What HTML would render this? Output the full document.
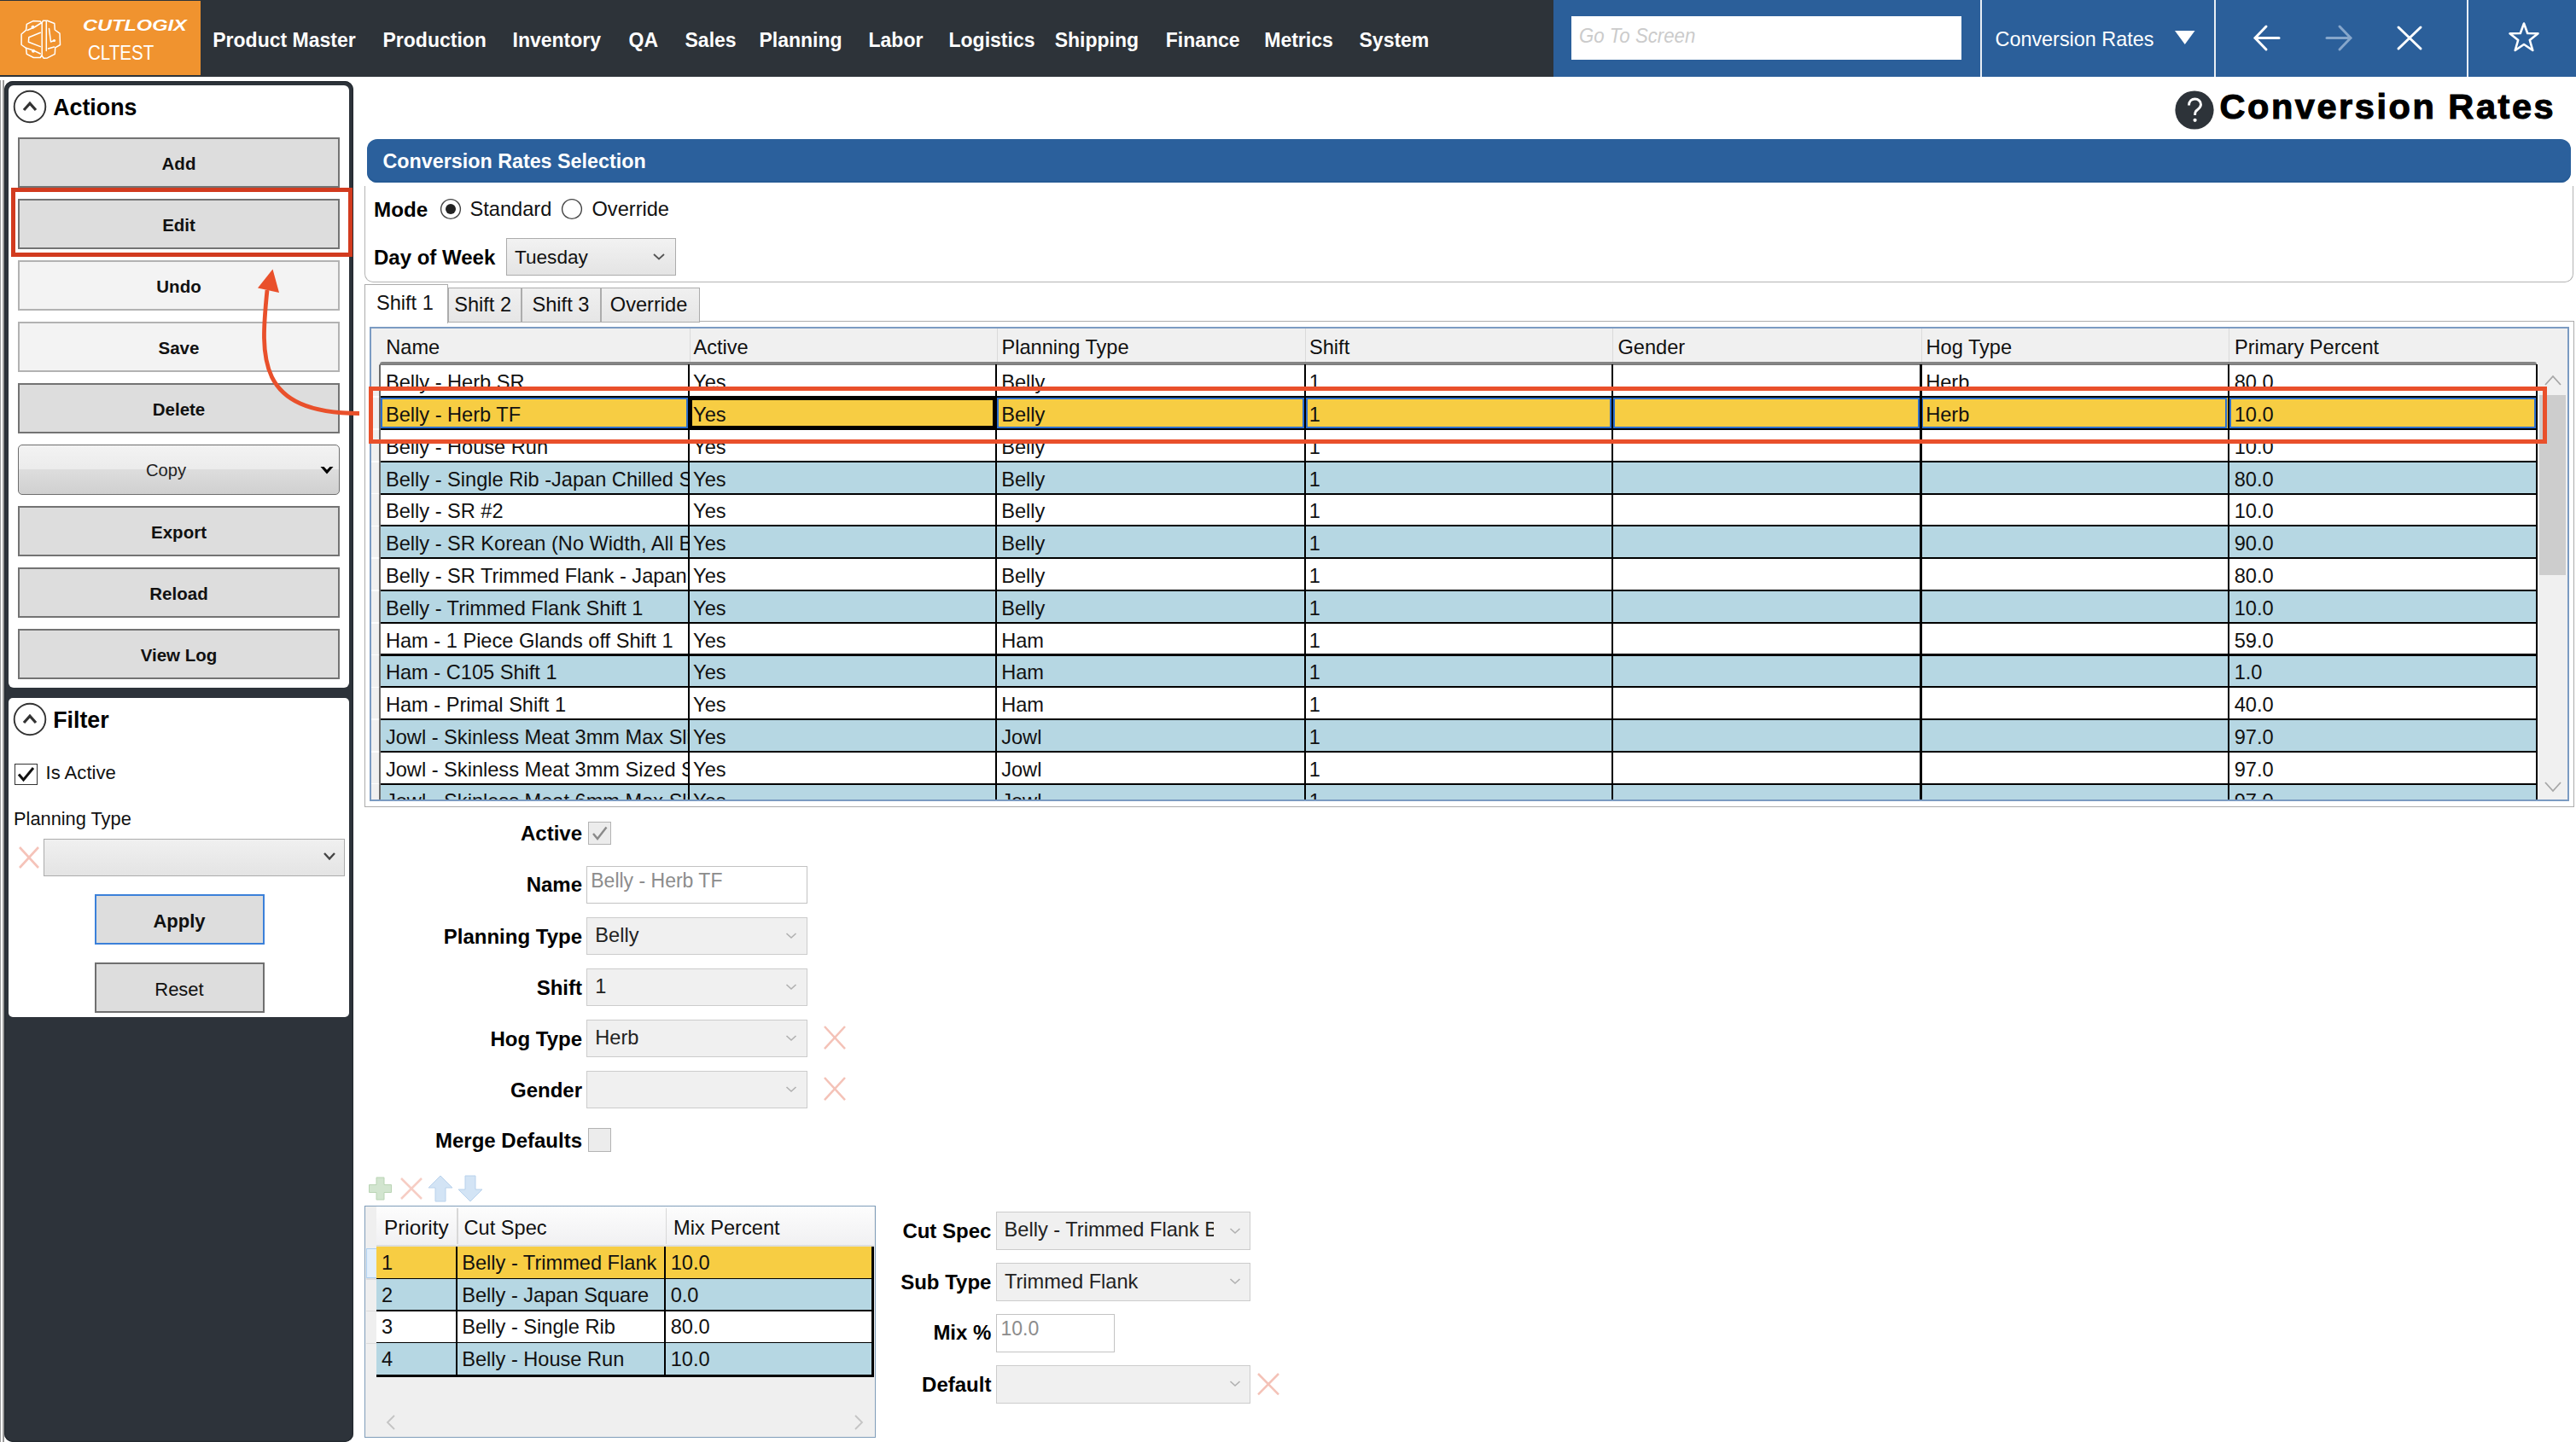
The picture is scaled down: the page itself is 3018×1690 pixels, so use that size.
<!DOCTYPE html>
<html><head><meta charset="utf-8"><style>
html,body{margin:0;padding:0;background:#fff;}
#root{position:relative;width:3018px;height:1690px;overflow:hidden;background:#fff;font-family:"Liberation Sans",sans-serif;}
#root div,#root svg{position:absolute;}
</style></head><body><div id="root">
<div style="left:0.00px;top:0.00px;width:1820.00px;height:90.00px;background:#2d3339;"></div>
<div style="left:0.00px;top:1.00px;width:234.80px;height:87.30px;background:#f0932f;"></div>
<div style="left:1819.50px;top:0.00px;width:1198.50px;height:90.00px;background:#2b5f9a;"></div>
<svg style="left:18.00px;top:15.00px;" width="60.00" height="60.00" viewBox="0 0 60.00 60.00"><g fill="none" stroke="#fff" stroke-width="1.5" stroke-linejoin="round" stroke-linecap="round">
<path d="M20.8 9.6 L29.2 10 L30.8 12.5 L32.5 9.2 L37.5 9.2 L45.8 12.5 L46.3 20 L52 24.2 L52.5 37.5 L46.7 40.8 L46.3 48.3 L37.5 52.9 L33.3 53.3 L30.8 50 L29.2 52.5 L21.3 52.5 L13.3 48.3 L12.5 41.3 L7.1 37.5 L7.1 25 L12.5 20.4 L13.3 13.3 Z"/>
<path d="M31.2 12.5 V50"/>
<path d="M36.3 10 V44.5"/>
<path d="M29.3 23.3 L15.8 28.8 L15.4 34.2 L29.3 39.6"/>
<path d="M29.3 12.5 L23 16.5 L14 20.5"/>
<path d="M12.5 41.3 L21 44 L29.3 48"/>
<path d="M39.5 18.5 L41.5 34 L45.5 32.5"/>
<path d="M38.5 42 L45.5 40"/>
</g><g fill="#fff"><circle cx="20.5" cy="16.8" r="2"/><circle cx="21" cy="44.8" r="2"/><circle cx="45.5" cy="32.5" r="1.6"/></g></svg>
<div style="left:97.30px;top:20.76px;font-size:18px;line-height:18px;color:#fff;white-space:nowrap;font-weight:bold;font-style:italic;transform:scaleX(1.3100);transform-origin:0 0;">CUTLOGIX</div>
<div style="left:103.30px;top:49.81px;font-size:24.8px;line-height:24.8px;color:#fff;white-space:nowrap;transform:scaleX(0.8300);transform-origin:0 0;">CLTEST</div>
<div style="left:249.25px;top:35.53px;font-size:23px;line-height:23px;color:#fff;white-space:nowrap;font-weight:bold;--w:166.75;">Product Master</div>
<div style="left:448.50px;top:35.53px;font-size:23px;line-height:23px;color:#fff;white-space:nowrap;font-weight:bold;--w:119.5;">Production</div>
<div style="left:600.50px;top:35.53px;font-size:23px;line-height:23px;color:#fff;white-space:nowrap;font-weight:bold;--w:104;">Inventory</div>
<div style="left:736.50px;top:35.53px;font-size:23px;line-height:23px;color:#fff;white-space:nowrap;font-weight:bold;--w:34;">QA</div>
<div style="left:802.50px;top:35.53px;font-size:23px;line-height:23px;color:#fff;white-space:nowrap;font-weight:bold;--w:56;">Sales</div>
<div style="left:889.50px;top:35.53px;font-size:23px;line-height:23px;color:#fff;white-space:nowrap;font-weight:bold;--w:95;">Planning</div>
<div style="left:1017.50px;top:35.53px;font-size:23px;line-height:23px;color:#fff;white-space:nowrap;font-weight:bold;--w:61;">Labor</div>
<div style="left:1111.50px;top:35.53px;font-size:23px;line-height:23px;color:#fff;white-space:nowrap;font-weight:bold;--w:93;">Logistics</div>
<div style="left:1235.70px;top:35.53px;font-size:23px;line-height:23px;color:#fff;white-space:nowrap;font-weight:bold;--w:97.3;">Shipping</div>
<div style="left:1365.75px;top:35.53px;font-size:23px;line-height:23px;color:#fff;white-space:nowrap;font-weight:bold;--w:83;">Finance</div>
<div style="left:1481.25px;top:35.53px;font-size:23px;line-height:23px;color:#fff;white-space:nowrap;font-weight:bold;--w:79.25;">Metrics</div>
<div style="left:1592.50px;top:35.53px;font-size:23px;line-height:23px;color:#fff;white-space:nowrap;font-weight:bold;--w:78;">System</div>
<div style="left:1841.00px;top:19.00px;width:457.00px;height:51.00px;background:#fff;"></div>
<div style="left:1849.50px;top:30.59px;font-size:23.4px;line-height:23.4px;color:#cbcbcb;white-space:nowrap;font-style:italic;transform:scaleX(0.9500);transform-origin:0 0;">Go To Screen</div>
<div style="left:2319.50px;top:0.00px;width:2.00px;height:90.00px;background:#e8eef5;"></div>
<div style="left:2594.00px;top:0.00px;width:2.00px;height:90.00px;background:#e8eef5;"></div>
<div style="left:2889.50px;top:0.00px;width:2.00px;height:90.00px;background:#e8eef5;"></div>
<div style="left:2337.50px;top:34.69px;font-size:23.4px;line-height:23.4px;color:#fff;white-space:nowrap;">Conversion Rates</div>
<svg style="left:2546.00px;top:34.00px;" width="28.00" height="20.00" viewBox="0 0 28.00 20.00"><path d="M2 2 L25.5 2 L13.75 18 Z" fill="#fff"/></svg>
<svg style="left:2636.00px;top:26.00px;" width="40.00" height="38.00" viewBox="0 0 40.00 38.00"><g fill="none" stroke="#fff" stroke-width="3" stroke-linecap="round" stroke-linejoin="round"><path d="M6 18.5 H34"/><path d="M19 5 L6 18.5 L19 32"/></g></svg>
<svg style="left:2720.00px;top:26.00px;" width="40.00" height="38.00" viewBox="0 0 40.00 38.00"><g fill="none" stroke="#86a6cb" stroke-width="3" stroke-linecap="round" stroke-linejoin="round"><path d="M6 18.5 H34"/><path d="M21 5 L34 18.5 L21 32"/></g></svg>
<svg style="left:2805.00px;top:27.00px;" width="36.00" height="36.00" viewBox="0 0 36.00 36.00"><g fill="none" stroke="#fff" stroke-width="3" stroke-linecap="round"><path d="M5 5 L31 30"/><path d="M31 5 L5 30"/></g></svg>
<svg style="left:2936.00px;top:23.00px;" width="42.00" height="42.00" viewBox="0 0 42.00 42.00"><path d="M21 4.5 L25.2 16 L37.5 16.3 L27.8 24 L31.3 36 L21 29 L10.7 36 L14.2 24 L4.5 16.3 L16.8 16 Z" fill="none" stroke="#fff" stroke-width="2.6" stroke-linejoin="round"/></svg>
<div style="left:0.00px;top:94.00px;width:1.20px;height:1596.00px;background:#9a9a9a;"></div>
<div style="left:3.10px;top:94.00px;width:1.60px;height:1596.00px;background:#9a9a9a;"></div>
<div style="left:4.66px;top:94.60px;width:409.74px;height:1595.20px;background:#2d333a;border-radius:10px;box-shadow:inset 0 0 0 1.2px #23292f;"></div>
<div style="left:10.10px;top:100.40px;width:398.50px;height:705.60px;background:#fff;border-radius:6px;"></div>
<div style="left:10.10px;top:818.00px;width:398.50px;height:374.30px;background:#fff;border-radius:5px;"></div>
<svg style="left:14.30px;top:104.30px;" width="42.00" height="42.00" viewBox="0 0 42.00 42.00"><circle cx="21" cy="21" r="18.3" fill="none" stroke="#333" stroke-width="1.9"/><path d="M14 25 L21 17.2 L28 25" fill="none" stroke="#333" stroke-width="3.2"/></svg>
<div style="left:62.20px;top:113.41px;font-size:26.8px;line-height:26.8px;color:#000;white-space:nowrap;font-weight:bold;">Actions</div>
<div style="left:21.00px;top:161.00px;width:377.00px;height:58.50px;background:#dddddd;border:2px solid #737373;box-sizing:border-box;"></div>
<div style="left:-190.50px;top:181.90px;width:800px;text-align:center;font-size:20.5px;line-height:20.5px;color:#111;white-space:nowrap;font-weight:bold;">Add</div>
<div style="left:21.00px;top:233.00px;width:377.00px;height:58.50px;background:#dddddd;border:2px solid #737373;box-sizing:border-box;"></div>
<div style="left:-190.50px;top:253.90px;width:800px;text-align:center;font-size:20.5px;line-height:20.5px;color:#111;white-space:nowrap;font-weight:bold;">Edit</div>
<div style="left:21.00px;top:305.00px;width:377.00px;height:58.50px;background:#f3f3f3;border:2px solid #b2b2b2;box-sizing:border-box;"></div>
<div style="left:-190.50px;top:325.90px;width:800px;text-align:center;font-size:20.5px;line-height:20.5px;color:#111;white-space:nowrap;font-weight:bold;">Undo</div>
<div style="left:21.00px;top:377.00px;width:377.00px;height:58.50px;background:#f3f3f3;border:2px solid #b2b2b2;box-sizing:border-box;"></div>
<div style="left:-190.50px;top:397.90px;width:800px;text-align:center;font-size:20.5px;line-height:20.5px;color:#111;white-space:nowrap;font-weight:bold;">Save</div>
<div style="left:21.00px;top:449.00px;width:377.00px;height:58.50px;background:#dddddd;border:2px solid #737373;box-sizing:border-box;"></div>
<div style="left:-190.50px;top:469.90px;width:800px;text-align:center;font-size:20.5px;line-height:20.5px;color:#111;white-space:nowrap;font-weight:bold;">Delete</div>
<div style="left:20.90px;top:521.00px;width:377.00px;height:58.50px;background:linear-gradient(#f3f3f3 0%,#ebebeb 50%,#dddddd 50%,#d0d0d0 100%);border:1.6px solid #6e6e6e;border-radius:5px;box-sizing:border-box;"></div>
<div style="left:-205.40px;top:540.90px;width:800px;text-align:center;font-size:20.2px;line-height:20.2px;color:#222;white-space:nowrap;">Copy</div>
<svg style="left:374.00px;top:545.00px;" width="18.00" height="12.00" viewBox="0 0 18.00 12.00"><path d="M1.5 2 L5.5 2 L9 5.8 L12.5 2 L16.5 2 L9 10.5 Z" fill="#000"/></svg>
<div style="left:21.00px;top:593.00px;width:377.00px;height:58.50px;background:#dddddd;border:2px solid #737373;box-sizing:border-box;"></div>
<div style="left:-190.50px;top:613.90px;width:800px;text-align:center;font-size:20.5px;line-height:20.5px;color:#111;white-space:nowrap;font-weight:bold;">Export</div>
<div style="left:21.00px;top:665.00px;width:377.00px;height:58.50px;background:#dddddd;border:2px solid #737373;box-sizing:border-box;"></div>
<div style="left:-190.50px;top:685.90px;width:800px;text-align:center;font-size:20.5px;line-height:20.5px;color:#111;white-space:nowrap;font-weight:bold;">Reload</div>
<div style="left:21.00px;top:737.00px;width:377.00px;height:58.50px;background:#dddddd;border:2px solid #737373;box-sizing:border-box;"></div>
<div style="left:-190.50px;top:757.90px;width:800px;text-align:center;font-size:20.5px;line-height:20.5px;color:#111;white-space:nowrap;font-weight:bold;">View Log</div>
<svg style="left:14.30px;top:822.00px;" width="42.00" height="42.00" viewBox="0 0 42.00 42.00"><circle cx="21" cy="21" r="18.3" fill="none" stroke="#333" stroke-width="1.9"/><path d="M14 25 L21 17.2 L28 25" fill="none" stroke="#333" stroke-width="3.2"/></svg>
<div style="left:62.20px;top:831.31px;font-size:26.8px;line-height:26.8px;color:#000;white-space:nowrap;font-weight:bold;">Filter</div>
<div style="left:17.00px;top:894.50px;width:27.00px;height:25.00px;background:#fff;border:1.6px solid #333;box-sizing:border-box;"></div>
<svg style="left:17.00px;top:894.50px;" width="27.00" height="25.00" viewBox="0 0 27.00 25.00"><path d="M5 12.5 L10.5 19 L22 5" fill="none" stroke="#111" stroke-width="3"/></svg>
<div style="left:53.50px;top:895.29px;font-size:22.1px;line-height:22.1px;color:#111;white-space:nowrap;">Is Active</div>
<div style="left:16.00px;top:949.05px;font-size:21.8px;line-height:21.8px;color:#111;white-space:nowrap;">Planning Type</div>
<div style="left:51.25px;top:982.50px;width:352.25px;height:44.50px;background:linear-gradient(#f0f0f0,#e4e4e4);border:1.6px solid #acacac;box-sizing:border-box;"></div>
<svg style="left:378.00px;top:998.00px;" width="16.00" height="12.00" viewBox="0 0 16.00 12.00"><path d="M2 2 L8 8.5 L14 2" fill="none" stroke="#444" stroke-width="2.4"/></svg>
<svg style="left:20.00px;top:990.00px;" width="28.00" height="30.00" viewBox="0 0 28.00 30.00"><g stroke="#f5c3b9" stroke-width="2.6"><path d="M3 3 L25 27"/><path d="M25 3 L3 27"/></g></svg>
<div style="left:110.60px;top:1048.20px;width:199.20px;height:59.05px;background:#dddddd;border:2.2px solid #3b80d9;box-sizing:border-box;"></div>
<div style="left:-190.00px;top:1069.38px;width:800px;text-align:center;font-size:22px;line-height:22px;color:#111;white-space:nowrap;font-weight:bold;">Apply</div>
<div style="left:110.60px;top:1128.40px;width:199.20px;height:58.60px;background:#dddddd;border:2px solid #6f6f6f;box-sizing:border-box;"></div>
<div style="left:-190.00px;top:1149.38px;width:800px;text-align:center;font-size:22px;line-height:22px;color:#111;white-space:nowrap;">Reset</div>
<svg style="left:2548.00px;top:105.50px;" width="46.00" height="46.00" viewBox="0 0 46.00 46.00"><circle cx="23" cy="23" r="22.6" fill="#2d3339"/><path d="M16.5 17.5 C16.5 12.5 20 10 23.5 10 C27.5 10 30.5 12.8 30.5 16.5 C30.5 20.5 26.5 22 24.5 24.5 C23.8 25.5 23.6 27 23.6 29" fill="none" stroke="#fff" stroke-width="2.9"/><circle cx="23.6" cy="34.8" r="2.1" fill="#fff"/></svg>
<div style="left:2600.50px;top:104.07px;font-size:41.5px;line-height:41.5px;color:#000;white-space:nowrap;font-weight:bold;letter-spacing:2.55px;-webkit-text-stroke:1.1px #000;">Conversion Rates</div>
<div style="left:430.00px;top:162.50px;width:2581.60px;height:51.90px;background:#2b609c;border-radius:12px;box-shadow:inset 0 -2px 0 #255a95;"></div>
<div style="left:448.50px;top:177.78px;font-size:23.3px;line-height:23.3px;color:#fff;white-space:nowrap;font-weight:bold;">Conversion Rates Selection</div>
<div style="left:427.00px;top:218.00px;width:2588.00px;height:113.00px;border:1.5px solid #b4b4b4;border-top:none;border-radius:0 0 10px 10px;box-sizing:border-box;"></div>
<div style="left:438.00px;top:233.51px;font-size:24.2px;line-height:24.2px;color:#000;white-space:nowrap;font-weight:bold;">Mode</div>
<svg style="left:514.00px;top:230.50px;" width="28.00" height="28.00" viewBox="0 0 28.00 28.00"><circle cx="14" cy="14" r="11.4" fill="#fff" stroke="#444" stroke-width="1.4"/><circle cx="14" cy="14" r="6" fill="#222"/></svg>
<div style="left:550.50px;top:234.02px;font-size:23.6px;line-height:23.6px;color:#111;white-space:nowrap;">Standard</div>
<svg style="left:656.00px;top:230.50px;" width="28.00" height="28.00" viewBox="0 0 28.00 28.00"><circle cx="14" cy="14" r="11.4" fill="#fff" stroke="#444" stroke-width="1.4"/></svg>
<div style="left:693.50px;top:234.02px;font-size:23.6px;line-height:23.6px;color:#111;white-space:nowrap;">Override</div>
<div style="left:438.00px;top:289.68px;font-size:24px;line-height:24px;color:#000;white-space:nowrap;font-weight:bold;">Day of Week</div>
<div style="left:592.50px;top:279.00px;width:199.50px;height:44.00px;background:linear-gradient(#f2f2f2,#e4e4e4);border:1.6px solid #acacac;box-sizing:border-box;"></div>
<div style="left:603.00px;top:290.87px;font-size:22.6px;line-height:22.6px;color:#111;white-space:nowrap;">Tuesday</div>
<svg style="left:764.00px;top:296.00px;" width="16.00" height="10.00" viewBox="0 0 16.00 10.00"><path d="M2 2 L8 7.5 L14 2" fill="none" stroke="#555" stroke-width="1.8"/></svg>
<div style="left:426.50px;top:376.30px;width:2589.00px;height:569.70px;border:1.5px solid #acacac;box-sizing:border-box;"></div>
<div style="left:525.30px;top:337.00px;width:85.70px;height:41.00px;background:linear-gradient(#f0f0f0,#e6e6e6);border:1.5px solid #acacac;box-sizing:border-box;"></div>
<div style="left:532.20px;top:345.62px;font-size:23.6px;line-height:23.6px;color:#111;white-space:nowrap;">Shift 2</div>
<div style="left:611.00px;top:337.00px;width:93.20px;height:41.00px;background:linear-gradient(#f0f0f0,#e6e6e6);border:1.5px solid #acacac;box-sizing:border-box;"></div>
<div style="left:623.50px;top:345.62px;font-size:23.6px;line-height:23.6px;color:#111;white-space:nowrap;">Shift 3</div>
<div style="left:704.20px;top:337.00px;width:115.50px;height:41.00px;background:linear-gradient(#f0f0f0,#e6e6e6);border:1.5px solid #acacac;box-sizing:border-box;"></div>
<div style="left:714.80px;top:345.62px;font-size:23.6px;line-height:23.6px;color:#111;white-space:nowrap;">Override</div>
<div style="left:426.50px;top:333.00px;width:98.80px;height:45.50px;background:#fff;border:1.5px solid #acacac;border-bottom:none;box-sizing:border-box;"></div>
<div style="left:440.90px;top:344.22px;font-size:23.6px;line-height:23.6px;color:#111;white-space:nowrap;">Shift 1</div>
<div style="left:432.50px;top:382.80px;width:2577.50px;height:556.70px;background:#f0f0f0;border:2px solid #7b9bc2;box-sizing:border-box;"></div>
<div style="left:807.50px;top:385.00px;width:1.20px;height:40.40px;background:#dadada;"></div>
<div style="left:1167.50px;top:385.00px;width:1.20px;height:40.40px;background:#dadada;"></div>
<div style="left:1529.25px;top:385.00px;width:1.20px;height:40.40px;background:#dadada;"></div>
<div style="left:1889.30px;top:385.00px;width:1.20px;height:40.40px;background:#dadada;"></div>
<div style="left:2250.90px;top:385.00px;width:1.20px;height:40.40px;background:#dadada;"></div>
<div style="left:2611.00px;top:385.00px;width:1.20px;height:40.40px;background:#dadada;"></div>
<div style="left:452.25px;top:395.62px;font-size:23.6px;line-height:23.6px;color:#111;white-space:nowrap;">Name</div>
<div style="left:812.40px;top:395.62px;font-size:23.6px;line-height:23.6px;color:#111;white-space:nowrap;">Active</div>
<div style="left:1173.50px;top:395.62px;font-size:23.6px;line-height:23.6px;color:#111;white-space:nowrap;">Planning Type</div>
<div style="left:1534.00px;top:395.62px;font-size:23.6px;line-height:23.6px;color:#111;white-space:nowrap;">Shift</div>
<div style="left:1895.50px;top:395.62px;font-size:23.6px;line-height:23.6px;color:#111;white-space:nowrap;">Gender</div>
<div style="left:2256.50px;top:395.62px;font-size:23.6px;line-height:23.6px;color:#111;white-space:nowrap;">Hog Type</div>
<div style="left:2618.00px;top:395.62px;font-size:23.6px;line-height:23.6px;color:#111;white-space:nowrap;">Primary Percent</div>
<div style="left:445.00px;top:427.40px;width:2528.60px;height:510.10px;overflow:hidden;background:#fff;">
<div style="left:0.00px;top:0.00px;width:2526.60px;height:37.79px;background:#fff;"></div>
<div style="left:2.00px;top:0.00px;width:359.00px;height:37.79px;overflow:hidden;"><div style="left:4.95px;top:9.82px;font-size:23.6px;line-height:23.6px;white-space:nowrap;color:#111;">Belly - Herb SR</div></div>
<div style="left:364.00px;top:0.00px;width:357.00px;height:37.79px;overflow:hidden;"><div style="left:3.10px;top:9.82px;font-size:23.6px;line-height:23.6px;white-space:nowrap;color:#111;">Yes</div></div>
<div style="left:724.00px;top:0.00px;width:358.75px;height:37.79px;overflow:hidden;"><div style="left:4.20px;top:9.82px;font-size:23.6px;line-height:23.6px;white-space:nowrap;color:#111;">Belly</div></div>
<div style="left:1085.75px;top:0.00px;width:357.05px;height:37.79px;overflow:hidden;"><div style="left:2.95px;top:9.82px;font-size:23.6px;line-height:23.6px;white-space:nowrap;color:#111;">1</div></div>
<div style="left:1807.40px;top:0.00px;width:357.10px;height:37.79px;overflow:hidden;"><div style="left:3.80px;top:9.82px;font-size:23.6px;line-height:23.6px;white-space:nowrap;color:#111;">Herb</div></div>
<div style="left:2167.50px;top:0.00px;width:358.10px;height:37.79px;overflow:hidden;"><div style="left:5.20px;top:9.82px;font-size:23.6px;line-height:23.6px;white-space:nowrap;color:#111;">80.0</div></div>
<div style="left:0.00px;top:37.79px;width:2526.60px;height:37.79px;background:#f7cd43;"></div>
<div style="left:2.00px;top:37.79px;width:359.00px;height:37.79px;overflow:hidden;"><div style="left:4.95px;top:9.82px;font-size:23.6px;line-height:23.6px;white-space:nowrap;color:#111;">Belly - Herb TF</div></div>
<div style="left:364.00px;top:37.79px;width:357.00px;height:37.79px;overflow:hidden;"><div style="left:3.10px;top:9.82px;font-size:23.6px;line-height:23.6px;white-space:nowrap;color:#111;">Yes</div></div>
<div style="left:724.00px;top:37.79px;width:358.75px;height:37.79px;overflow:hidden;"><div style="left:4.20px;top:9.82px;font-size:23.6px;line-height:23.6px;white-space:nowrap;color:#111;">Belly</div></div>
<div style="left:1085.75px;top:37.79px;width:357.05px;height:37.79px;overflow:hidden;"><div style="left:2.95px;top:9.82px;font-size:23.6px;line-height:23.6px;white-space:nowrap;color:#111;">1</div></div>
<div style="left:1807.40px;top:37.79px;width:357.10px;height:37.79px;overflow:hidden;"><div style="left:3.80px;top:9.82px;font-size:23.6px;line-height:23.6px;white-space:nowrap;color:#111;">Herb</div></div>
<div style="left:2167.50px;top:37.79px;width:358.10px;height:37.79px;overflow:hidden;"><div style="left:5.20px;top:9.82px;font-size:23.6px;line-height:23.6px;white-space:nowrap;color:#111;">10.0</div></div>
<div style="left:0.00px;top:75.58px;width:2526.60px;height:37.79px;background:#fff;"></div>
<div style="left:2.00px;top:75.58px;width:359.00px;height:37.79px;overflow:hidden;"><div style="left:4.95px;top:9.82px;font-size:23.6px;line-height:23.6px;white-space:nowrap;color:#111;">Belly - House Run</div></div>
<div style="left:364.00px;top:75.58px;width:357.00px;height:37.79px;overflow:hidden;"><div style="left:3.10px;top:9.82px;font-size:23.6px;line-height:23.6px;white-space:nowrap;color:#111;">Yes</div></div>
<div style="left:724.00px;top:75.58px;width:358.75px;height:37.79px;overflow:hidden;"><div style="left:4.20px;top:9.82px;font-size:23.6px;line-height:23.6px;white-space:nowrap;color:#111;">Belly</div></div>
<div style="left:1085.75px;top:75.58px;width:357.05px;height:37.79px;overflow:hidden;"><div style="left:2.95px;top:9.82px;font-size:23.6px;line-height:23.6px;white-space:nowrap;color:#111;">1</div></div>
<div style="left:2167.50px;top:75.58px;width:358.10px;height:37.79px;overflow:hidden;"><div style="left:5.20px;top:9.82px;font-size:23.6px;line-height:23.6px;white-space:nowrap;color:#111;">10.0</div></div>
<div style="left:0.00px;top:113.37px;width:2526.60px;height:37.79px;background:#b6d7e3;"></div>
<div style="left:2.00px;top:113.37px;width:359.00px;height:37.79px;overflow:hidden;"><div style="left:4.95px;top:9.82px;font-size:23.6px;line-height:23.6px;white-space:nowrap;color:#111;">Belly - Single Rib -Japan Chilled Shift 1</div></div>
<div style="left:364.00px;top:113.37px;width:357.00px;height:37.79px;overflow:hidden;"><div style="left:3.10px;top:9.82px;font-size:23.6px;line-height:23.6px;white-space:nowrap;color:#111;">Yes</div></div>
<div style="left:724.00px;top:113.37px;width:358.75px;height:37.79px;overflow:hidden;"><div style="left:4.20px;top:9.82px;font-size:23.6px;line-height:23.6px;white-space:nowrap;color:#111;">Belly</div></div>
<div style="left:1085.75px;top:113.37px;width:357.05px;height:37.79px;overflow:hidden;"><div style="left:2.95px;top:9.82px;font-size:23.6px;line-height:23.6px;white-space:nowrap;color:#111;">1</div></div>
<div style="left:2167.50px;top:113.37px;width:358.10px;height:37.79px;overflow:hidden;"><div style="left:5.20px;top:9.82px;font-size:23.6px;line-height:23.6px;white-space:nowrap;color:#111;">80.0</div></div>
<div style="left:0.00px;top:151.16px;width:2526.60px;height:37.79px;background:#fff;"></div>
<div style="left:2.00px;top:151.16px;width:359.00px;height:37.79px;overflow:hidden;"><div style="left:4.95px;top:9.82px;font-size:23.6px;line-height:23.6px;white-space:nowrap;color:#111;">Belly - SR #2</div></div>
<div style="left:364.00px;top:151.16px;width:357.00px;height:37.79px;overflow:hidden;"><div style="left:3.10px;top:9.82px;font-size:23.6px;line-height:23.6px;white-space:nowrap;color:#111;">Yes</div></div>
<div style="left:724.00px;top:151.16px;width:358.75px;height:37.79px;overflow:hidden;"><div style="left:4.20px;top:9.82px;font-size:23.6px;line-height:23.6px;white-space:nowrap;color:#111;">Belly</div></div>
<div style="left:1085.75px;top:151.16px;width:357.05px;height:37.79px;overflow:hidden;"><div style="left:2.95px;top:9.82px;font-size:23.6px;line-height:23.6px;white-space:nowrap;color:#111;">1</div></div>
<div style="left:2167.50px;top:151.16px;width:358.10px;height:37.79px;overflow:hidden;"><div style="left:5.20px;top:9.82px;font-size:23.6px;line-height:23.6px;white-space:nowrap;color:#111;">10.0</div></div>
<div style="left:0.00px;top:188.95px;width:2526.60px;height:37.79px;background:#b6d7e3;"></div>
<div style="left:2.00px;top:188.95px;width:359.00px;height:37.79px;overflow:hidden;"><div style="left:4.95px;top:9.82px;font-size:23.6px;line-height:23.6px;white-space:nowrap;color:#111;">Belly - SR Korean (No Width, All Belly)</div></div>
<div style="left:364.00px;top:188.95px;width:357.00px;height:37.79px;overflow:hidden;"><div style="left:3.10px;top:9.82px;font-size:23.6px;line-height:23.6px;white-space:nowrap;color:#111;">Yes</div></div>
<div style="left:724.00px;top:188.95px;width:358.75px;height:37.79px;overflow:hidden;"><div style="left:4.20px;top:9.82px;font-size:23.6px;line-height:23.6px;white-space:nowrap;color:#111;">Belly</div></div>
<div style="left:1085.75px;top:188.95px;width:357.05px;height:37.79px;overflow:hidden;"><div style="left:2.95px;top:9.82px;font-size:23.6px;line-height:23.6px;white-space:nowrap;color:#111;">1</div></div>
<div style="left:2167.50px;top:188.95px;width:358.10px;height:37.79px;overflow:hidden;"><div style="left:5.20px;top:9.82px;font-size:23.6px;line-height:23.6px;white-space:nowrap;color:#111;">90.0</div></div>
<div style="left:0.00px;top:226.74px;width:2526.60px;height:37.79px;background:#fff;"></div>
<div style="left:2.00px;top:226.74px;width:359.00px;height:37.79px;overflow:hidden;"><div style="left:4.95px;top:9.82px;font-size:23.6px;line-height:23.6px;white-space:nowrap;color:#111;">Belly - SR Trimmed Flank - Japan</div></div>
<div style="left:364.00px;top:226.74px;width:357.00px;height:37.79px;overflow:hidden;"><div style="left:3.10px;top:9.82px;font-size:23.6px;line-height:23.6px;white-space:nowrap;color:#111;">Yes</div></div>
<div style="left:724.00px;top:226.74px;width:358.75px;height:37.79px;overflow:hidden;"><div style="left:4.20px;top:9.82px;font-size:23.6px;line-height:23.6px;white-space:nowrap;color:#111;">Belly</div></div>
<div style="left:1085.75px;top:226.74px;width:357.05px;height:37.79px;overflow:hidden;"><div style="left:2.95px;top:9.82px;font-size:23.6px;line-height:23.6px;white-space:nowrap;color:#111;">1</div></div>
<div style="left:2167.50px;top:226.74px;width:358.10px;height:37.79px;overflow:hidden;"><div style="left:5.20px;top:9.82px;font-size:23.6px;line-height:23.6px;white-space:nowrap;color:#111;">80.0</div></div>
<div style="left:0.00px;top:264.53px;width:2526.60px;height:37.79px;background:#b6d7e3;"></div>
<div style="left:2.00px;top:264.53px;width:359.00px;height:37.79px;overflow:hidden;"><div style="left:4.95px;top:9.82px;font-size:23.6px;line-height:23.6px;white-space:nowrap;color:#111;">Belly - Trimmed Flank Shift 1</div></div>
<div style="left:364.00px;top:264.53px;width:357.00px;height:37.79px;overflow:hidden;"><div style="left:3.10px;top:9.82px;font-size:23.6px;line-height:23.6px;white-space:nowrap;color:#111;">Yes</div></div>
<div style="left:724.00px;top:264.53px;width:358.75px;height:37.79px;overflow:hidden;"><div style="left:4.20px;top:9.82px;font-size:23.6px;line-height:23.6px;white-space:nowrap;color:#111;">Belly</div></div>
<div style="left:1085.75px;top:264.53px;width:357.05px;height:37.79px;overflow:hidden;"><div style="left:2.95px;top:9.82px;font-size:23.6px;line-height:23.6px;white-space:nowrap;color:#111;">1</div></div>
<div style="left:2167.50px;top:264.53px;width:358.10px;height:37.79px;overflow:hidden;"><div style="left:5.20px;top:9.82px;font-size:23.6px;line-height:23.6px;white-space:nowrap;color:#111;">10.0</div></div>
<div style="left:0.00px;top:302.32px;width:2526.60px;height:37.79px;background:#fff;"></div>
<div style="left:2.00px;top:302.32px;width:359.00px;height:37.79px;overflow:hidden;"><div style="left:4.95px;top:9.82px;font-size:23.6px;line-height:23.6px;white-space:nowrap;color:#111;">Ham - 1 Piece Glands off Shift 1</div></div>
<div style="left:364.00px;top:302.32px;width:357.00px;height:37.79px;overflow:hidden;"><div style="left:3.10px;top:9.82px;font-size:23.6px;line-height:23.6px;white-space:nowrap;color:#111;">Yes</div></div>
<div style="left:724.00px;top:302.32px;width:358.75px;height:37.79px;overflow:hidden;"><div style="left:4.20px;top:9.82px;font-size:23.6px;line-height:23.6px;white-space:nowrap;color:#111;">Ham</div></div>
<div style="left:1085.75px;top:302.32px;width:357.05px;height:37.79px;overflow:hidden;"><div style="left:2.95px;top:9.82px;font-size:23.6px;line-height:23.6px;white-space:nowrap;color:#111;">1</div></div>
<div style="left:2167.50px;top:302.32px;width:358.10px;height:37.79px;overflow:hidden;"><div style="left:5.20px;top:9.82px;font-size:23.6px;line-height:23.6px;white-space:nowrap;color:#111;">59.0</div></div>
<div style="left:0.00px;top:340.11px;width:2526.60px;height:37.79px;background:#b6d7e3;"></div>
<div style="left:2.00px;top:340.11px;width:359.00px;height:37.79px;overflow:hidden;"><div style="left:4.95px;top:9.82px;font-size:23.6px;line-height:23.6px;white-space:nowrap;color:#111;">Ham - C105 Shift 1</div></div>
<div style="left:364.00px;top:340.11px;width:357.00px;height:37.79px;overflow:hidden;"><div style="left:3.10px;top:9.82px;font-size:23.6px;line-height:23.6px;white-space:nowrap;color:#111;">Yes</div></div>
<div style="left:724.00px;top:340.11px;width:358.75px;height:37.79px;overflow:hidden;"><div style="left:4.20px;top:9.82px;font-size:23.6px;line-height:23.6px;white-space:nowrap;color:#111;">Ham</div></div>
<div style="left:1085.75px;top:340.11px;width:357.05px;height:37.79px;overflow:hidden;"><div style="left:2.95px;top:9.82px;font-size:23.6px;line-height:23.6px;white-space:nowrap;color:#111;">1</div></div>
<div style="left:2167.50px;top:340.11px;width:358.10px;height:37.79px;overflow:hidden;"><div style="left:5.20px;top:9.82px;font-size:23.6px;line-height:23.6px;white-space:nowrap;color:#111;">1.0</div></div>
<div style="left:0.00px;top:377.90px;width:2526.60px;height:37.79px;background:#fff;"></div>
<div style="left:2.00px;top:377.90px;width:359.00px;height:37.79px;overflow:hidden;"><div style="left:4.95px;top:9.82px;font-size:23.6px;line-height:23.6px;white-space:nowrap;color:#111;">Ham - Primal Shift 1</div></div>
<div style="left:364.00px;top:377.90px;width:357.00px;height:37.79px;overflow:hidden;"><div style="left:3.10px;top:9.82px;font-size:23.6px;line-height:23.6px;white-space:nowrap;color:#111;">Yes</div></div>
<div style="left:724.00px;top:377.90px;width:358.75px;height:37.79px;overflow:hidden;"><div style="left:4.20px;top:9.82px;font-size:23.6px;line-height:23.6px;white-space:nowrap;color:#111;">Ham</div></div>
<div style="left:1085.75px;top:377.90px;width:357.05px;height:37.79px;overflow:hidden;"><div style="left:2.95px;top:9.82px;font-size:23.6px;line-height:23.6px;white-space:nowrap;color:#111;">1</div></div>
<div style="left:2167.50px;top:377.90px;width:358.10px;height:37.79px;overflow:hidden;"><div style="left:5.20px;top:9.82px;font-size:23.6px;line-height:23.6px;white-space:nowrap;color:#111;">40.0</div></div>
<div style="left:0.00px;top:415.69px;width:2526.60px;height:37.79px;background:#b6d7e3;"></div>
<div style="left:2.00px;top:415.69px;width:359.00px;height:37.79px;overflow:hidden;"><div style="left:4.95px;top:9.82px;font-size:23.6px;line-height:23.6px;white-space:nowrap;color:#111;">Jowl - Skinless Meat 3mm Max Slice</div></div>
<div style="left:364.00px;top:415.69px;width:357.00px;height:37.79px;overflow:hidden;"><div style="left:3.10px;top:9.82px;font-size:23.6px;line-height:23.6px;white-space:nowrap;color:#111;">Yes</div></div>
<div style="left:724.00px;top:415.69px;width:358.75px;height:37.79px;overflow:hidden;"><div style="left:4.20px;top:9.82px;font-size:23.6px;line-height:23.6px;white-space:nowrap;color:#111;">Jowl</div></div>
<div style="left:1085.75px;top:415.69px;width:357.05px;height:37.79px;overflow:hidden;"><div style="left:2.95px;top:9.82px;font-size:23.6px;line-height:23.6px;white-space:nowrap;color:#111;">1</div></div>
<div style="left:2167.50px;top:415.69px;width:358.10px;height:37.79px;overflow:hidden;"><div style="left:5.20px;top:9.82px;font-size:23.6px;line-height:23.6px;white-space:nowrap;color:#111;">97.0</div></div>
<div style="left:0.00px;top:453.48px;width:2526.60px;height:37.79px;background:#fff;"></div>
<div style="left:2.00px;top:453.48px;width:359.00px;height:37.79px;overflow:hidden;"><div style="left:4.95px;top:9.82px;font-size:23.6px;line-height:23.6px;white-space:nowrap;color:#111;">Jowl - Skinless Meat 3mm Sized Shift</div></div>
<div style="left:364.00px;top:453.48px;width:357.00px;height:37.79px;overflow:hidden;"><div style="left:3.10px;top:9.82px;font-size:23.6px;line-height:23.6px;white-space:nowrap;color:#111;">Yes</div></div>
<div style="left:724.00px;top:453.48px;width:358.75px;height:37.79px;overflow:hidden;"><div style="left:4.20px;top:9.82px;font-size:23.6px;line-height:23.6px;white-space:nowrap;color:#111;">Jowl</div></div>
<div style="left:1085.75px;top:453.48px;width:357.05px;height:37.79px;overflow:hidden;"><div style="left:2.95px;top:9.82px;font-size:23.6px;line-height:23.6px;white-space:nowrap;color:#111;">1</div></div>
<div style="left:2167.50px;top:453.48px;width:358.10px;height:37.79px;overflow:hidden;"><div style="left:5.20px;top:9.82px;font-size:23.6px;line-height:23.6px;white-space:nowrap;color:#111;">97.0</div></div>
<div style="left:0.00px;top:491.27px;width:2526.60px;height:37.79px;background:#b6d7e3;"></div>
<div style="left:2.00px;top:491.27px;width:359.00px;height:37.79px;overflow:hidden;"><div style="left:4.95px;top:9.82px;font-size:23.6px;line-height:23.6px;white-space:nowrap;color:#111;">Jowl - Skinless Meat 6mm Max Slice</div></div>
<div style="left:364.00px;top:491.27px;width:357.00px;height:37.79px;overflow:hidden;"><div style="left:3.10px;top:9.82px;font-size:23.6px;line-height:23.6px;white-space:nowrap;color:#111;">Yes</div></div>
<div style="left:724.00px;top:491.27px;width:358.75px;height:37.79px;overflow:hidden;"><div style="left:4.20px;top:9.82px;font-size:23.6px;line-height:23.6px;white-space:nowrap;color:#111;">Jowl</div></div>
<div style="left:1085.75px;top:491.27px;width:357.05px;height:37.79px;overflow:hidden;"><div style="left:2.95px;top:9.82px;font-size:23.6px;line-height:23.6px;white-space:nowrap;color:#111;">1</div></div>
<div style="left:2167.50px;top:491.27px;width:358.10px;height:37.79px;overflow:hidden;"><div style="left:5.20px;top:9.82px;font-size:23.6px;line-height:23.6px;white-space:nowrap;color:#111;">97.0</div></div>
<div style="left:1.00px;top:38.69px;width:360.00px;height:35.99px;border:2.3px solid #2e6fce;box-sizing:border-box;"></div>
<div style="left:363.00px;top:38.29px;width:358.00px;height:36.79px;border:3px solid #000;box-sizing:border-box;"></div>
<div style="left:723.00px;top:38.69px;width:359.75px;height:35.99px;border:2.3px solid #2e6fce;box-sizing:border-box;"></div>
<div style="left:1084.75px;top:38.69px;width:358.05px;height:35.99px;border:2.3px solid #2e6fce;box-sizing:border-box;"></div>
<div style="left:1444.80px;top:38.69px;width:359.60px;height:35.99px;border:2.3px solid #2e6fce;box-sizing:border-box;"></div>
<div style="left:1806.40px;top:38.69px;width:358.10px;height:35.99px;border:2.3px solid #2e6fce;box-sizing:border-box;"></div>
<div style="left:2166.50px;top:38.69px;width:359.10px;height:35.99px;border:2.3px solid #2e6fce;box-sizing:border-box;"></div>
<div style="left:0.00px;top:-1.05px;width:2528.60px;height:2.10px;background:#7a7a7a;"></div>
<div style="left:0.00px;top:36.74px;width:2528.60px;height:2.10px;background:#000;"></div>
<div style="left:0.00px;top:74.53px;width:2528.60px;height:2.10px;background:#000;"></div>
<div style="left:0.00px;top:112.32px;width:2528.60px;height:2.10px;background:#000;"></div>
<div style="left:0.00px;top:150.11px;width:2528.60px;height:2.10px;background:#000;"></div>
<div style="left:0.00px;top:187.90px;width:2528.60px;height:2.10px;background:#000;"></div>
<div style="left:0.00px;top:225.69px;width:2528.60px;height:2.10px;background:#000;"></div>
<div style="left:0.00px;top:263.48px;width:2528.60px;height:2.10px;background:#000;"></div>
<div style="left:0.00px;top:301.27px;width:2528.60px;height:2.10px;background:#000;"></div>
<div style="left:0.00px;top:339.06px;width:2528.60px;height:2.10px;background:#000;"></div>
<div style="left:0.00px;top:376.85px;width:2528.60px;height:2.10px;background:#000;"></div>
<div style="left:0.00px;top:414.64px;width:2528.60px;height:2.10px;background:#000;"></div>
<div style="left:0.00px;top:452.43px;width:2528.60px;height:2.10px;background:#000;"></div>
<div style="left:0.00px;top:490.22px;width:2528.60px;height:2.10px;background:#000;"></div>
<div style="left:0.00px;top:528.01px;width:2528.60px;height:2.10px;background:#000;"></div>
<div style="left:361.00px;top:0.00px;width:2.20px;height:600.00px;background:#000;"></div>
<div style="left:721.00px;top:0.00px;width:2.20px;height:600.00px;background:#000;"></div>
<div style="left:1082.75px;top:0.00px;width:2.20px;height:600.00px;background:#000;"></div>
<div style="left:1442.80px;top:0.00px;width:2.20px;height:600.00px;background:#000;"></div>
<div style="left:1804.40px;top:0.00px;width:2.20px;height:600.00px;background:#000;"></div>
<div style="left:2164.50px;top:0.00px;width:2.20px;height:600.00px;background:#000;"></div>
<div style="left:2525.60px;top:0.00px;width:2.20px;height:600.00px;background:#000;"></div>
</div>
<div style="left:443.00px;top:426.90px;width:3.20px;height:510.60px;background:#6a6a6a;border-radius:3px 0 0 0;"></div>
<div style="left:445.00px;top:424.40px;width:2526.60px;height:2.90px;background:#858585;border-radius:4px 4px 0 0;"></div>
<div style="left:434.50px;top:427.40px;width:9.50px;height:510.10px;background:#f0f0f0;"></div>
<div style="left:434.50px;top:464.39px;width:9.50px;height:1.60px;background:#fdfdfd;"></div>
<div style="left:434.50px;top:502.18px;width:9.50px;height:1.60px;background:#fdfdfd;"></div>
<div style="left:434.50px;top:539.97px;width:9.50px;height:1.60px;background:#fdfdfd;"></div>
<div style="left:434.50px;top:577.76px;width:9.50px;height:1.60px;background:#fdfdfd;"></div>
<div style="left:434.50px;top:615.55px;width:9.50px;height:1.60px;background:#fdfdfd;"></div>
<div style="left:434.50px;top:653.34px;width:9.50px;height:1.60px;background:#fdfdfd;"></div>
<div style="left:434.50px;top:691.13px;width:9.50px;height:1.60px;background:#fdfdfd;"></div>
<div style="left:434.50px;top:728.92px;width:9.50px;height:1.60px;background:#fdfdfd;"></div>
<div style="left:434.50px;top:766.71px;width:9.50px;height:1.60px;background:#fdfdfd;"></div>
<div style="left:434.50px;top:804.50px;width:9.50px;height:1.60px;background:#fdfdfd;"></div>
<div style="left:434.50px;top:842.29px;width:9.50px;height:1.60px;background:#fdfdfd;"></div>
<div style="left:434.50px;top:880.08px;width:9.50px;height:1.60px;background:#fdfdfd;"></div>
<div style="left:434.50px;top:917.87px;width:9.50px;height:1.60px;background:#fdfdfd;"></div>
<div style="left:2972.60px;top:426.40px;width:35.40px;height:511.10px;background:#f0f0f0;"></div>
<div style="left:2974.80px;top:462.75px;width:31.70px;height:211.00px;background:#cdcdcd;"></div>
<svg style="left:2980.00px;top:438.00px;" width="22.00" height="16.00" viewBox="0 0 22.00 16.00"><path d="M2 13 L11 3 L20 13" fill="none" stroke="#a6a6a6" stroke-width="1.8"/></svg>
<svg style="left:2980.00px;top:914.00px;" width="22.00" height="16.00" viewBox="0 0 22.00 16.00"><path d="M2 3 L11 13 L20 3" fill="none" stroke="#a6a6a6" stroke-width="1.8"/></svg>
<div style="left:-118.00px;top:964.68px;width:800px;text-align:right;font-size:24px;line-height:24px;color:#000;white-space:nowrap;font-weight:bold;">Active</div>
<div style="left:688.75px;top:962.50px;width:27.50px;height:27.50px;background:#ececec;border:1.6px solid #b3b3b3;box-sizing:border-box;"></div>
<svg style="left:688.75px;top:962.50px;" width="27.50" height="27.50" viewBox="0 0 27.50 27.50"><path d="M6 14 L11 20 L21.5 6.5" fill="none" stroke="#8a8a8a" stroke-width="2.4"/></svg>
<div style="left:-118.00px;top:1024.68px;width:800px;text-align:right;font-size:24px;line-height:24px;color:#000;white-space:nowrap;font-weight:bold;">Name</div>
<div style="left:687.00px;top:1014.50px;width:258.50px;height:44.25px;background:#fff;border:1.6px solid #c3c3c3;box-sizing:border-box;"></div>
<div style="left:692.25px;top:1020.53px;font-size:23px;line-height:23px;color:#8c8c8c;white-space:nowrap;">Belly - Herb TF</div>
<div style="left:-118.00px;top:1085.68px;width:800px;text-align:right;font-size:24px;line-height:24px;color:#000;white-space:nowrap;font-weight:bold;">Planning Type</div>
<div style="left:687.00px;top:1074.50px;width:258.50px;height:44.75px;background:#f0f0f0;border:1.6px solid #cccccc;box-sizing:border-box;"></div>
<div style="left:697.30px;top:1085.02px;font-size:23.6px;line-height:23.6px;color:#222;white-space:nowrap;">Belly</div>
<svg style="left:919.00px;top:1091.88px;" width="16.00" height="10.00" viewBox="0 0 16.00 10.00"><path d="M2.5 2 L8 7 L13.5 2" fill="none" stroke="#b0b0b0" stroke-width="1.6"/></svg>
<div style="left:-118.00px;top:1145.68px;width:800px;text-align:right;font-size:24px;line-height:24px;color:#000;white-space:nowrap;font-weight:bold;">Shift</div>
<div style="left:687.00px;top:1134.50px;width:258.50px;height:44.75px;background:#f0f0f0;border:1.6px solid #cccccc;box-sizing:border-box;"></div>
<div style="left:697.30px;top:1145.02px;font-size:23.6px;line-height:23.6px;color:#222;white-space:nowrap;">1</div>
<svg style="left:919.00px;top:1151.88px;" width="16.00" height="10.00" viewBox="0 0 16.00 10.00"><path d="M2.5 2 L8 7 L13.5 2" fill="none" stroke="#b0b0b0" stroke-width="1.6"/></svg>
<div style="left:-118.00px;top:1205.68px;width:800px;text-align:right;font-size:24px;line-height:24px;color:#000;white-space:nowrap;font-weight:bold;">Hog Type</div>
<div style="left:687.00px;top:1194.50px;width:258.50px;height:44.75px;background:#f0f0f0;border:1.6px solid #cccccc;box-sizing:border-box;"></div>
<div style="left:697.30px;top:1205.02px;font-size:23.6px;line-height:23.6px;color:#222;white-space:nowrap;">Herb</div>
<svg style="left:919.00px;top:1211.88px;" width="16.00" height="10.00" viewBox="0 0 16.00 10.00"><path d="M2.5 2 L8 7 L13.5 2" fill="none" stroke="#b0b0b0" stroke-width="1.6"/></svg>
<div style="left:-118.00px;top:1265.68px;width:800px;text-align:right;font-size:24px;line-height:24px;color:#000;white-space:nowrap;font-weight:bold;">Gender</div>
<div style="left:687.00px;top:1254.50px;width:258.50px;height:44.75px;background:#f0f0f0;border:1.6px solid #cccccc;box-sizing:border-box;"></div>
<svg style="left:919.00px;top:1271.88px;" width="16.00" height="10.00" viewBox="0 0 16.00 10.00"><path d="M2.5 2 L8 7 L13.5 2" fill="none" stroke="#b0b0b0" stroke-width="1.6"/></svg>
<svg style="left:964.00px;top:1200.50px;" width="28.00" height="30.25" viewBox="0 0 28.00 30.25"><g stroke="#f4c2b7" stroke-width="2.5"><path d="M2 2 L26.0 28.2"/><path d="M26.0 2 L2 28.2"/></g></svg>
<svg style="left:964.00px;top:1260.50px;" width="28.00" height="30.25" viewBox="0 0 28.00 30.25"><g stroke="#f4c2b7" stroke-width="2.5"><path d="M2 2 L26.0 28.2"/><path d="M26.0 2 L2 28.2"/></g></svg>
<div style="left:-118.00px;top:1324.68px;width:800px;text-align:right;font-size:24px;line-height:24px;color:#000;white-space:nowrap;font-weight:bold;">Merge Defaults</div>
<div style="left:688.75px;top:1322.00px;width:27.50px;height:27.50px;background:#ececec;border:1.6px solid #b3b3b3;box-sizing:border-box;"></div>
<svg style="left:430.00px;top:1377.00px;" width="32.00" height="32.00" viewBox="0 0 32.00 32.00"><path d="M11 3 H20 V11.5 H28.5 V20.5 H20 V29 H11 V20.5 H2.5 V11.5 H11 Z" fill="#d2e5cf" stroke="#b9d4b4" stroke-width="1"/></svg>
<svg style="left:468.00px;top:1379.00px;" width="28.00" height="28.00" viewBox="0 0 28.00 28.00"><g stroke="#f6cdc4" stroke-width="2.5"><path d="M2 2 L26.0 26.0"/><path d="M26.0 2 L2 26.0"/></g></svg>
<svg style="left:499.00px;top:1376.00px;" width="34.00" height="34.00" viewBox="0 0 34.00 34.00"><path d="M17 2 L31 16 H23 V32 H11 V16 H3 Z" fill="#d3e4f5" stroke="#b9d2ec" stroke-width="1"/></svg>
<svg style="left:534.00px;top:1376.00px;" width="34.00" height="34.00" viewBox="0 0 34.00 34.00"><path d="M11 2 H23 V18 H31 L17 32 L3 18 H11 Z" fill="#d3e4f5" stroke="#b9d2ec" stroke-width="1"/></svg>
<div style="left:427.00px;top:1412.50px;width:598.50px;height:272.00px;background:#efefef;border:1.6px solid #7f9db9;box-sizing:border-box;"></div>
<div style="left:441.00px;top:1414.00px;width:583.00px;height:46.00px;background:linear-gradient(#fdfdfd,#f0f0f2);"></div>
<div style="left:428.50px;top:1414.00px;width:12.50px;height:269.00px;background:#efefef;"></div>
<div style="left:535.00px;top:1416.00px;width:1.50px;height:42.00px;background:#d8d8d8;"></div>
<div style="left:779.50px;top:1416.00px;width:1.50px;height:42.00px;background:#d8d8d8;"></div>
<div style="left:441.00px;top:1459.00px;width:583.00px;height:2.00px;background:#dedede;"></div>
<div style="left:449.75px;top:1427.52px;font-size:23.6px;line-height:23.6px;color:#111;white-space:nowrap;transform:scaleX(1.0300);transform-origin:0 0;">Priority</div>
<div style="left:543.50px;top:1427.52px;font-size:23.6px;line-height:23.6px;color:#111;white-space:nowrap;">Cut Spec</div>
<div style="left:789.00px;top:1427.52px;font-size:23.6px;line-height:23.6px;color:#111;white-space:nowrap;">Mix Percent</div>
<div style="left:441.00px;top:1461.00px;width:581.50px;height:37.80px;background:#f7cd43;"></div>
<div style="left:442.50px;top:1461.00px;width:91.50px;height:37.80px;overflow:hidden;"><div style="left:4.45px;top:7.82px;font-size:23.6px;line-height:23.6px;white-space:nowrap;color:#111;">1</div></div>
<div style="left:536.50px;top:1461.00px;width:241.50px;height:37.80px;overflow:hidden;"><div style="left:4.70px;top:7.82px;font-size:23.6px;line-height:23.6px;white-space:nowrap;color:#111;">Belly - Trimmed Flank</div></div>
<div style="left:780.50px;top:1461.00px;width:241.00px;height:37.80px;overflow:hidden;"><div style="left:5.20px;top:7.82px;font-size:23.6px;line-height:23.6px;white-space:nowrap;color:#111;">10.0</div></div>
<div style="left:441.00px;top:1497.60px;width:583.00px;height:2.50px;background:#000;"></div>
<div style="left:441.00px;top:1498.80px;width:581.50px;height:37.80px;background:#b6d7e3;"></div>
<div style="left:442.50px;top:1498.80px;width:91.50px;height:37.80px;overflow:hidden;"><div style="left:4.45px;top:7.82px;font-size:23.6px;line-height:23.6px;white-space:nowrap;color:#111;">2</div></div>
<div style="left:536.50px;top:1498.80px;width:241.50px;height:37.80px;overflow:hidden;"><div style="left:4.70px;top:7.82px;font-size:23.6px;line-height:23.6px;white-space:nowrap;color:#111;">Belly - Japan Square</div></div>
<div style="left:780.50px;top:1498.80px;width:241.00px;height:37.80px;overflow:hidden;"><div style="left:5.20px;top:7.82px;font-size:23.6px;line-height:23.6px;white-space:nowrap;color:#111;">0.0</div></div>
<div style="left:441.00px;top:1535.40px;width:583.00px;height:2.50px;background:#000;"></div>
<div style="left:441.00px;top:1536.60px;width:581.50px;height:37.80px;background:#fff;"></div>
<div style="left:442.50px;top:1536.60px;width:91.50px;height:37.80px;overflow:hidden;"><div style="left:4.45px;top:7.82px;font-size:23.6px;line-height:23.6px;white-space:nowrap;color:#111;">3</div></div>
<div style="left:536.50px;top:1536.60px;width:241.50px;height:37.80px;overflow:hidden;"><div style="left:4.70px;top:7.82px;font-size:23.6px;line-height:23.6px;white-space:nowrap;color:#111;">Belly - Single Rib</div></div>
<div style="left:780.50px;top:1536.60px;width:241.00px;height:37.80px;overflow:hidden;"><div style="left:5.20px;top:7.82px;font-size:23.6px;line-height:23.6px;white-space:nowrap;color:#111;">80.0</div></div>
<div style="left:441.00px;top:1573.20px;width:583.00px;height:2.50px;background:#000;"></div>
<div style="left:441.00px;top:1574.40px;width:581.50px;height:37.80px;background:#b6d7e3;"></div>
<div style="left:442.50px;top:1574.40px;width:91.50px;height:37.80px;overflow:hidden;"><div style="left:4.45px;top:7.82px;font-size:23.6px;line-height:23.6px;white-space:nowrap;color:#111;">4</div></div>
<div style="left:536.50px;top:1574.40px;width:241.50px;height:37.80px;overflow:hidden;"><div style="left:4.70px;top:7.82px;font-size:23.6px;line-height:23.6px;white-space:nowrap;color:#111;">Belly - House Run</div></div>
<div style="left:780.50px;top:1574.40px;width:241.00px;height:37.80px;overflow:hidden;"><div style="left:5.20px;top:7.82px;font-size:23.6px;line-height:23.6px;white-space:nowrap;color:#111;">10.0</div></div>
<div style="left:441.00px;top:1611.00px;width:583.00px;height:2.50px;background:#000;"></div>
<div style="left:533.80px;top:1461.00px;width:2.50px;height:152.50px;background:#000;"></div>
<div style="left:777.80px;top:1461.00px;width:2.50px;height:152.50px;background:#000;"></div>
<div style="left:1021.30px;top:1461.00px;width:2.50px;height:152.50px;background:#000;"></div>
<div style="left:428.50px;top:1462.50px;width:12.50px;height:35.50px;background:#e3effa;border:1px solid #a9cdf0;border-right:none;box-sizing:border-box;"></div>
<div style="left:428.50px;top:1498.00px;width:12.50px;height:1.60px;background:#dcdcdc;"></div>
<div style="left:428.50px;top:1535.80px;width:12.50px;height:1.60px;background:#dcdcdc;"></div>
<div style="left:428.50px;top:1573.60px;width:12.50px;height:1.60px;background:#dcdcdc;"></div>
<svg style="left:450.00px;top:1656.00px;" width="16.00" height="22.00" viewBox="0 0 16.00 22.00"><path d="M12 3 L4 11 L12 19" fill="none" stroke="#c4c4c4" stroke-width="1.8"/></svg>
<svg style="left:998.00px;top:1656.00px;" width="16.00" height="22.00" viewBox="0 0 16.00 22.00"><path d="M4 3 L12 11 L4 19" fill="none" stroke="#c4c4c4" stroke-width="1.8"/></svg>
<div style="left:361.40px;top:1431.08px;width:800px;text-align:right;font-size:24px;line-height:24px;color:#000;white-space:nowrap;font-weight:bold;">Cut Spec</div>
<div style="left:1166.60px;top:1420.00px;width:298.90px;height:45.00px;background:#f0f0f0;border:1.6px solid #cccccc;box-sizing:border-box;"></div>
<div style="left:1170.60px;top:1422.00px;width:251.90px;height:41.00px;overflow:hidden;"><div style="left:6.00px;top:7.52px;font-size:23.6px;line-height:23.6px;white-space:nowrap;color:#222;">Belly - Trimmed Flank Bellies</div></div>
<svg style="left:1438.70px;top:1437.50px;" width="16.00" height="10.00" viewBox="0 0 16.00 10.00"><path d="M2.5 2 L8 7 L13.5 2" fill="none" stroke="#b0b0b0" stroke-width="1.6"/></svg>
<div style="left:361.40px;top:1490.68px;width:800px;text-align:right;font-size:24px;line-height:24px;color:#000;white-space:nowrap;font-weight:bold;">Sub Type</div>
<div style="left:1166.60px;top:1480.00px;width:298.90px;height:44.80px;background:#f0f0f0;border:1.6px solid #cccccc;box-sizing:border-box;"></div>
<div style="left:1176.90px;top:1490.52px;font-size:23.6px;line-height:23.6px;color:#222;white-space:nowrap;">Trimmed Flank</div>
<svg style="left:1438.70px;top:1497.40px;" width="16.00" height="10.00" viewBox="0 0 16.00 10.00"><path d="M2.5 2 L8 7 L13.5 2" fill="none" stroke="#b0b0b0" stroke-width="1.6"/></svg>
<div style="left:361.40px;top:1550.48px;width:800px;text-align:right;font-size:24px;line-height:24px;color:#000;white-space:nowrap;font-weight:bold;">Mix %</div>
<div style="left:1166.60px;top:1540.00px;width:139.00px;height:44.80px;background:#fff;border:1.6px solid #c3c3c3;box-sizing:border-box;"></div>
<div style="left:1172.50px;top:1545.53px;font-size:23px;line-height:23px;color:#8c8c8c;white-space:nowrap;">10.0</div>
<div style="left:361.40px;top:1610.68px;width:800px;text-align:right;font-size:24px;line-height:24px;color:#000;white-space:nowrap;font-weight:bold;">Default</div>
<div style="left:1166.60px;top:1600.30px;width:298.90px;height:44.30px;background:#f0f0f0;border:1.6px solid #cccccc;box-sizing:border-box;"></div>
<svg style="left:1438.70px;top:1617.45px;" width="16.00" height="10.00" viewBox="0 0 16.00 10.00"><path d="M2.5 2 L8 7 L13.5 2" fill="none" stroke="#b0b0b0" stroke-width="1.6"/></svg>
<svg style="left:1472.00px;top:1607.70px;" width="28.00" height="28.30" viewBox="0 0 28.00 28.30"><g stroke="#f4c2b7" stroke-width="2.5"><path d="M2 2 L26.0 26.3"/><path d="M26.0 2 L2 26.3"/></g></svg>
<div style="left:13.00px;top:220.00px;width:399.50px;height:80.50px;border:5px solid #d23b1f;box-sizing:border-box;"></div>
<div style="left:431.90px;top:453.20px;width:2552.60px;height:66.80px;border:5px solid #e9502b;box-sizing:border-box;"></div>
<svg style="left:290.00px;top:300.00px;" width="140.00" height="200.00" viewBox="0 0 140.00 200.00"><path d="M131 184.5 C10 184, 15 120, 23 40" fill="none" stroke="#e9502b" stroke-width="4.8"/><path d="M29.5 15.5 L12 37.5 L37 43 Z" fill="#e9502b"/></svg>
</div></body></html>
